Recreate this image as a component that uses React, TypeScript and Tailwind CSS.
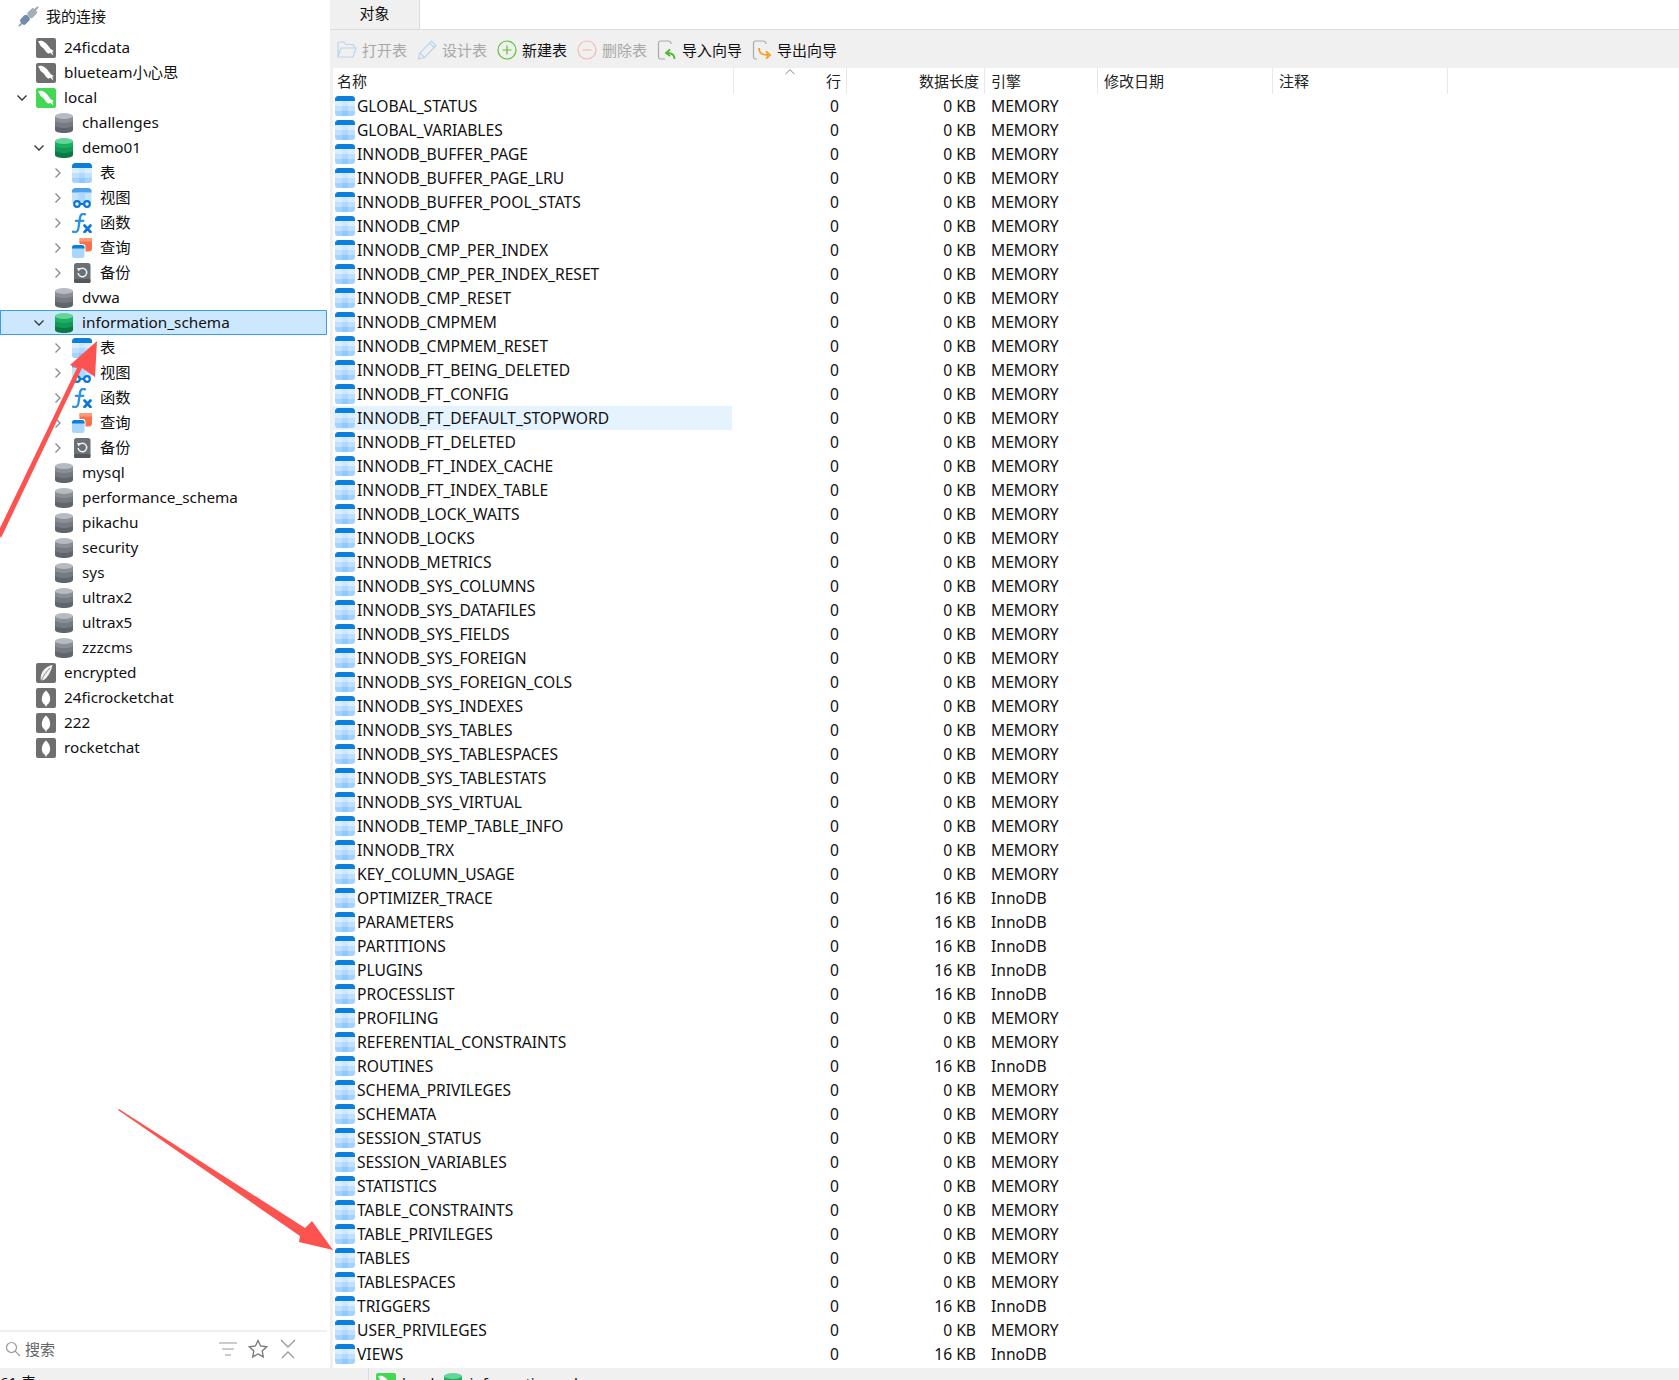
const FONT = "font-['Noto_Sans','Noto_Sans_CJK_SC',sans-serif]";

const rows: [string, number, string][] = [
  ...[
    "GLOBAL_STATUS","GLOBAL_VARIABLES","INNODB_BUFFER_PAGE","INNODB_BUFFER_PAGE_LRU","INNODB_BUFFER_POOL_STATS","INNODB_CMP","INNODB_CMP_PER_INDEX","INNODB_CMP_PER_INDEX_RESET","INNODB_CMP_RESET","INNODB_CMPMEM","INNODB_CMPMEM_RESET","INNODB_FT_BEING_DELETED","INNODB_FT_CONFIG","INNODB_FT_DEFAULT_STOPWORD","INNODB_FT_DELETED","INNODB_FT_INDEX_CACHE","INNODB_FT_INDEX_TABLE","INNODB_LOCK_WAITS","INNODB_LOCKS","INNODB_METRICS","INNODB_SYS_COLUMNS","INNODB_SYS_DATAFILES","INNODB_SYS_FIELDS","INNODB_SYS_FOREIGN","INNODB_SYS_FOREIGN_COLS","INNODB_SYS_INDEXES","INNODB_SYS_TABLES","INNODB_SYS_TABLESPACES","INNODB_SYS_TABLESTATS","INNODB_SYS_VIRTUAL","INNODB_TEMP_TABLE_INFO","INNODB_TRX","KEY_COLUMN_USAGE",
  ].map((n): [string, number, string] => [n, 0, "MEMORY"]),
  ["OPTIMIZER_TRACE",16,"InnoDB"],["PARAMETERS",16,"InnoDB"],["PARTITIONS",16,"InnoDB"],["PLUGINS",16,"InnoDB"],["PROCESSLIST",16,"InnoDB"],
  ["PROFILING",0,"MEMORY"],["REFERENTIAL_CONSTRAINTS",0,"MEMORY"],["ROUTINES",16,"InnoDB"],["SCHEMA_PRIVILEGES",0,"MEMORY"],["SCHEMATA",0,"MEMORY"],["SESSION_STATUS",0,"MEMORY"],["SESSION_VARIABLES",0,"MEMORY"],["STATISTICS",0,"MEMORY"],["TABLE_CONSTRAINTS",0,"MEMORY"],["TABLE_PRIVILEGES",0,"MEMORY"],["TABLES",0,"MEMORY"],["TABLESPACES",0,"MEMORY"],["TRIGGERS",16,"InnoDB"],["USER_PRIVILEGES",0,"MEMORY"],["VIEWS",16,"InnoDB"],
];

function TableIcon({ className = "w-5 h-5" }: { className?: string }) {
  return (
    <svg viewBox="0 0 20 20" className={className}>
      <defs>
        <clipPath id="tc"><rect width="20" height="20" rx="3.5" /></clipPath>
      </defs>
      <g clipPath="url(#tc)">
        <rect width="20" height="20" fill="#c6e3fe" />
        <rect width="20" height="5" fill="#0a7fdc" />
        <rect x="0" y="5" width="7" height="5" fill="#dbeeff" />
        <rect x="7" y="5" width="6" height="5" fill="#cfe8ff" />
        <rect x="13" y="5" width="7" height="5" fill="#dbeeff" />
        <rect x="0" y="10" width="7" height="5" fill="#bfe0ff" />
        <rect x="7" y="10" width="6" height="5" fill="#aed8ff" />
        <rect x="13" y="10" width="7" height="5" fill="#bfe0ff" />
        <rect x="0" y="15" width="7" height="5" fill="#a3d3ff" />
        <rect x="7" y="15" width="6" height="5" fill="#8fc9ff" />
        <rect x="13" y="15" width="7" height="5" fill="#a3d3ff" />
      </g>
    </svg>
  );
}

function ViewIcon() {
  return (
    <svg viewBox="0 0 20 20" className="w-5 h-5">
      <rect x="0" y="0" width="19.500" height="17" rx="3.500" fill="#c6e3fe" />
      <path d="M0 3.500A3.500 3.500 0 0 1 3.500 0h12.500A3.500 3.500 0 0 1 19.500 3.500V4.500H0z" fill="#4aa3ea" />
      <rect x="6.500" y="4.500" width="6.500" height="12" fill="#aed8ff" />
      <circle cx="5" cy="16" r="2.800" fill="#fff" stroke="#0a78d6" strokeWidth="2.200" />
      <circle cx="15" cy="16" r="2.800" fill="#fff" stroke="#0a78d6" strokeWidth="2.200" />
      <rect x="7.500" y="15" width="5" height="2" fill="#0a78d6" />
    </svg>
  );
}

function FxIcon() {
  return (
    <svg viewBox="0 0 20 20" className="w-5 h-5" fill="none" strokeLinecap="round">
      <path d="M13 1.300C10 .2 8.500 1.800 8 4.800L6.400 15.300C5.900 18.500 4 19.800 1 18.600" stroke="#2a93e8" strokeWidth="2.300" />
      <path d="M3.800 7.800h7.600" stroke="#2a93e8" strokeWidth="2.300" />
      <path d="M12.500 12.500l6 6.500M18.500 12.500l-6 6.500" stroke="#0a78d6" strokeWidth="2.600" />
    </svg>
  );
}

function QueryIcon() {
  return (
    <svg viewBox="0 0 20 20" className="w-5 h-5">
      <path d="M7.500 1A1 1 0 0 1 8.500 0H19a1 1 0 0 1 1 1v9.500a3 3 0 0 1-3 3h-3.500V9A3 3 0 0 0 10.500 6H7.500z" fill="#f8714d" />
      <rect x="7.500" y="0" width="12.500" height="3.500" rx="1" fill="#ff9a78" />
      <rect x="0" y="7" width="12.500" height="13" rx="2.500" fill="#a8d6ff" />
      <path d="M0 9.500A2.500 2.500 0 0 1 2.500 7h7.500A2.500 2.500 0 0 1 12.500 9.500V10.500H0z" fill="#0a7fdc" />
    </svg>
  );
}

function BackupIcon() {
  return (
    <svg viewBox="0 0 20 20" className="w-5 h-5">
      <rect x="2" y="0" width="16.500" height="20" rx="2.500" fill="#6b7076" />
      <rect x="2" y="16" width="16.500" height="4" rx="1.500" fill="#54585e" />
      <path d="M7 6.800A4.300 4.300 0 1 1 6.100 10" fill="none" stroke="#f2f2f2" strokeWidth="1.500" />
      <path d="M5 4.800l3.800.600-2.300 3z" fill="#f2f2f2" />
    </svg>
  );
}

function DbIcon({ green }: { green?: boolean }) {
  const [a, b, c, d] = green
    ? ["#63d596", "#1cae63", "#119a55", "#0b7a42"]
    : ["#b7bbc1", "#8a8f96", "#757a82", "#5f656c"];
  return (
    <svg viewBox="0 0 18 20" className="w-[18px] h-[20px]">
      <path d="M0 3v14c0 1.700 4 3 9 3s9-1.300 9-3V3z" fill={d} />
      <path d="M0 3v9c0 1.700 4 3 9 3s9-1.300 9-3V3z" fill={c} />
      <path d="M0 3v4c0 1.700 4 3 9 3s9-1.300 9-3V3z" fill={b} />
      <ellipse cx="9" cy="3" rx="9" ry="3" fill={a} />
    </svg>
  );
}

function Dolphin({ green }: { green?: boolean }) {
  return (
    <svg viewBox="0 0 20 20" className="w-5 h-5">
      <rect width="20" height="20" rx="2" fill={green ? "#43d854" : "#6f6f6f"} />
      <path d="M2 3.500c2.200-1.300 4.800-.700 7 1 2.600 2 4 4.500 5.500 6.200.9 1 2 1.700 3.500 2.300l-1.700.8 1 3.700-3-2.700c-.7 1-1.700.9-2.600.5-2-1-2.600-3-4-4.700C6.500 9 5 8.600 4.300 7.400 3.800 6.300 3.200 4.600 2 3.500z" fill="#fff" />
    </svg>
  );
}

function Leaf({ feather }: { feather?: boolean }) {
  return (
    <svg viewBox="0 0 20 20" className="w-5 h-5">
      <rect width="20" height="20" rx="2" fill="#6f6f6f" />
      {feather ? (
        <>
          <path d="M16.500 2C10 3 5.500 8 4.800 14c-.200 1.300-.100 2.500.100 3.500 1 .200 2.400-.200 3.600-1 3.500-2.600 6.500-8 8-14.500z" fill="#f2f2f2" />
          <path d="M14 5C10 9 7 13 5 18.500" stroke="#6f6f6f" strokeWidth="0.800" fill="none" />
        </>
      ) : (
        <path d="M10 2.500c2.500 2.300 4.200 5.200 4.200 8.500 0 3-1.600 5-3.400 6l-.3 1.500h-1l-.3-1.500c-1.800-1-3.400-3-3.400-6 0-3.300 1.700-6.200 4.200-8.500z" fill="#fff" />
      )}
    </svg>
  );
}

function PlugIcon() {
  return (
    <svg viewBox="0 0 22 22" className="w-[21px] h-[21px]">
      <path d="M1.500 20.500L6 16" stroke="#8fa3b8" strokeWidth="2" strokeLinecap="round" />
      <path d="M16 6l4.500-4.500" stroke="#8fa3b8" strokeWidth="2" strokeLinecap="round" />
      <rect x="3.500" y="9.500" width="7.500" height="10" rx="2.500" transform="rotate(45 7.250 14.500)" fill="#6e8cb0" />
      <rect x="11" y="2.500" width="7.500" height="10" rx="2.500" transform="rotate(45 14.750 7.500)" fill="#a7adb5" />
    </svg>
  );
}

function Chevron({ open }: { open?: boolean }) {
  return open ? (
    <svg viewBox="0 0 12 12" className="w-3 h-3 ml-[1px]" fill="none">
      <path d="M1.500 3.500L6 8l4.500-4.500" stroke="#333" strokeWidth="1.300" />
    </svg>
  ) : (
    <svg viewBox="0 0 12 12" className="w-3 h-3" fill="none">
      <path d="M3.500 1.500L8 6l-4.500 4.500" stroke="#8a8a8a" strokeWidth="1.300" />
    </svg>
  );
}

function TreeRow({
  pad, chevron, icon, label, selected,
}: { pad: number; chevron?: "open" | "closed"; icon: React.ReactNode; label: string; selected?: boolean }) {
  const padClass = pad === 1 ? "pl-[15px]" : pad === 2 ? "pl-[32px]" : "pl-[52px]";
  const gapClass = pad === 1 ? "w-[21px]" : pad === 2 ? "w-[22px]" : "w-[20px]";
  return (
    <div className={`h-[25px] flex items-center text-[15.3px] text-[#111] ${padClass} ${selected ? "bg-[#cce8ff] shadow-[inset_0_0_0_1px_#3e9bea] w-[327px] rounded-[1px]" : ""}`}>
      <div className={`${gapClass} shrink-0 flex items-center`}>
        {chevron && <Chevron open={chevron === "open"} />}
      </div>
      <div className="w-5 h-5 shrink-0 flex items-center justify-center">{icon}</div>
      <span className="ml-[8px] whitespace-nowrap">{label}</span>
    </div>
  );
}

function SubTree() {
  return (
    <>
      <TreeRow pad={3} chevron="closed" icon={<TableIcon />} label="表" />
      <TreeRow pad={3} chevron="closed" icon={<ViewIcon />} label="视图" />
      <TreeRow pad={3} chevron="closed" icon={<FxIcon />} label="函数" />
      <TreeRow pad={3} chevron="closed" icon={<QueryIcon />} label="查询" />
      <TreeRow pad={3} chevron="closed" icon={<BackupIcon />} label="备份" />
    </>
  );
}

function Sidebar() {
  const db = (n: string) => <TreeRow key={n} pad={2} icon={<DbIcon />} label={n} />;
  return (
    <aside className="w-[330px] shrink-0 flex flex-col h-full">
      <div className="h-[35px] flex items-center pl-[18px] pb-[2px] text-[15px] text-[#111]">
        <PlugIcon />
        <span className="ml-[7px]">我的连接</span>
      </div>
      <TreeRow pad={1} icon={<Dolphin />} label="24ficdata" />
      <TreeRow pad={1} icon={<Dolphin />} label="blueteam小心思" />
      <TreeRow pad={1} chevron="open" icon={<Dolphin green />} label="local" />
      {db("challenges")}
      <TreeRow pad={2} chevron="open" icon={<DbIcon green />} label="demo01" />
      <SubTree />
      {db("dvwa")}
      <TreeRow pad={2} chevron="open" icon={<DbIcon green />} label="information_schema" selected />
      <SubTree />
      {["mysql", "performance_schema", "pikachu", "security", "sys", "ultrax2", "ultrax5", "zzzcms"].map(db)}
      <TreeRow pad={1} icon={<Leaf feather />} label="encrypted" />
      <TreeRow pad={1} icon={<Leaf />} label="24ficrocketchat" />
      <TreeRow pad={1} icon={<Leaf />} label="222" />
      <TreeRow pad={1} icon={<Leaf />} label="rocketchat" />
      <div className="flex-1" />
      <div className="h-[38px] border-t-2 border-[#f0f0f0] w-[327px] flex items-center pl-[5px] pb-[2px]">
        <svg viewBox="0 0 16 16" className="w-4 h-4" fill="none" stroke="#9a9a9a" strokeWidth="1.200">
          <circle cx="6.500" cy="6.500" r="5" />
          <path d="M10.200 10.200L15 15" />
        </svg>
        <span className="ml-[4px] text-[15px] text-[#666]">搜索</span>
        <div className="flex-1" />
        <svg viewBox="0 0 18 14" className="w-[18px] h-[14px] mr-[11px]" fill="none" stroke="#9a9a9a" strokeWidth="1.200">
          <path d="M0 1h18M3 7h12M6 13h6" />
        </svg>
        <svg viewBox="0 0 20 20" className="w-5 h-5 mr-[12px]" fill="none" stroke="#777" strokeWidth="1.300">
          <path d="M10 1.500l2.600 5.500 6 .8-4.400 4.100 1.100 6L10 15l-5.300 2.900 1.100-6L1.400 7.800l6-.8z" />
        </svg>
        <svg viewBox="0 0 16 20" className="w-4 h-5 mr-[31px]" fill="none" stroke="#9a9a9a" strokeWidth="1.300">
          <path d="M1 1l7 7 7-7M2 19l6-6 6 6" />
        </svg>
      </div>
    </aside>
  );
}

function ToolItem({ icon, label, disabled }: { icon: React.ReactNode; label: string; disabled?: boolean }) {
  return (
    <div className="flex items-center gap-[5px]">
      <span className="w-5 h-5 flex items-center justify-center">{icon}</span>
      <span className={`text-[15px] whitespace-nowrap ${disabled ? "text-[#a8a8a8]" : "text-[#111]"}`}>{label}</span>
    </div>
  );
}

function Toolbar() {
  return (
    <div className="h-[38px] bg-[#f0f0f0] flex items-center pl-[7px] pt-[2px] gap-[10px]">
      <ToolItem disabled label="打开表" icon={
        <svg viewBox="0 0 20 18" className="w-5 h-[18px]" fill="none" stroke="#b9d4ec" strokeWidth="1.200">
          <path d="M1 16V2.500A1.500 1.500 0 0 1 2.500 1H7l2 2.500h7a1 1 0 0 1 1 1V7" />
          <path d="M1 16L4 7h15l-3 9z" />
        </svg>} />
      <ToolItem disabled label="设计表" icon={
        <svg viewBox="0 0 20 20" className="w-5 h-5" fill="none" stroke="#b9d4ec" strokeWidth="1.200">
          <path d="M1.500 19l1.500-6L14.500 1l4.500 4.500L7.500 17.500z" />
          <path d="M3 13l4.500 4.500M12.500 3l4.500 4.500" />
        </svg>} />
      <ToolItem label="新建表" icon={
        <svg viewBox="0 0 20 20" className="w-5 h-5" fill="none" stroke="#5fc235" strokeWidth="1.200">
          <circle cx="10" cy="10" r="9" />
          <path d="M10 5.500v9M5.500 10h9" />
        </svg>} />
      <ToolItem disabled label="删除表" icon={
        <svg viewBox="0 0 20 20" className="w-5 h-5" fill="none" stroke="#f5b8b4" strokeWidth="1.200">
          <circle cx="10" cy="10" r="9" />
          <path d="M5.500 10h9" />
        </svg>} />
      <ToolItem label="导入向导" icon={
        <svg viewBox="0 0 20 20" className="w-5 h-5" fill="none">
          <path d="M8 19H3.500A2 2 0 0 1 1.500 17V3A2 2 0 0 1 3.500 1H11a3 3 0 0 1 3 3" stroke="#aaaaaa" strokeWidth="1.200" />
          <path d="M17.500 19c0-4-2-6-7-6" stroke="#4cb82c" strokeWidth="1.800" />
          <path d="M13 9.500l-4 3.500 4 3" stroke="#4cb82c" strokeWidth="1.800" />
        </svg>} />
      <ToolItem label="导出向导" icon={
        <svg viewBox="0 0 20 20" className="w-5 h-5" fill="none">
          <path d="M5 19H3.500A2 2 0 0 1 1.500 17V3A2 2 0 0 1 3.500 1H11a3 3 0 0 1 3 3" stroke="#aaaaaa" strokeWidth="1.200" />
          <path d="M7 8c0 5 2.500 7 9 7" stroke="#f59e1b" strokeWidth="1.800" />
          <path d="M14 11.500l4 3.500-4 3.500" stroke="#f59e1b" strokeWidth="1.800" />
        </svg>} />
    </div>
  );
}

function Header() {
  return (
    <div className="h-[26px] flex text-[15px] text-[#222] relative">
      <div className="w-[401px] border-r border-[#e8e8e8] pl-[4px] flex items-center">名称</div>
      <div className="w-[113px] border-r border-[#e8e8e8] pr-[5px] flex items-center justify-end">行</div>
      <div className="w-[138px] border-r border-[#e8e8e8] pr-[5px] flex items-center justify-end">数据长度</div>
      <div className="w-[113px] border-r border-[#e8e8e8] pl-[6px] flex items-center">引擎</div>
      <div className="w-[175px] border-r border-[#e8e8e8] pl-[6px] flex items-center">修改日期</div>
      <div className="w-[175px] border-r border-[#e8e8e8] pl-[6px] flex items-center">注释</div>
      <svg viewBox="0 0 10 6" className="absolute left-[452px] top-[1px] w-[10px] h-[6px]" fill="none" stroke="#888" strokeWidth="1">
        <path d="M.5 5L5 .8 9.500 5" />
      </svg>
    </div>
  );
}

function Row({ name, kb, engine }: { name: string; kb: number; engine: string }) {
  const hl = name === "INNODB_FT_DEFAULT_STOPWORD";
  return (
    <div className="h-6 flex items-center text-[15.6px] text-[#111]">
      <div className={`w-[399px] h-6 flex items-center pl-[2px] ${hl ? "bg-[#e5f3ff]" : ""}`}>
        <TableIcon className="w-5 h-5 shrink-0" />
        <span className="ml-[2px] pt-[2px] whitespace-nowrap">{name}</span>
      </div>
      <div className="w-[107px] pt-[2px] text-right">0</div>
      <div className="w-[137px] pt-[2px] text-right">{kb} KB</div>
      <div className="ml-[15px] pt-[2px]">{engine}</div>
    </div>
  );
}

export default function App() {
  return (
    <div className={`${FONT} relative w-[1679px] h-[1380px] overflow-hidden bg-white flex flex-col`}>
      <div className="flex h-[1368px]">
        <Sidebar />
        <main className="flex-1 min-w-0 flex flex-col">
          <div className="h-[30px] flex border-b border-[#dcdcdc]">
            <div className="w-[90px] bg-[#f0f0f0] flex items-center justify-center pb-[2px] text-[15px] text-[#111] border-r border-[#dcdcdc]">对象</div>
          </div>
          <Toolbar />
          <div className="flex-1 border-l-[3px] border-[#f0f0f0]">
            <Header />
            {rows.map(([n, k, e]) => <Row key={n} name={n} kb={k} engine={e} />)}
          </div>
        </main>
      </div>
      <div className="h-[12px] bg-[#f0f0f0] flex text-[15px] text-[#111] overflow-hidden">
        <div className="w-[369px] border-r border-[#dcdcdc] leading-[28px]">61 表</div>
        <div className="flex pt-[5px] pl-[7px]">
          <Dolphin green />
          <span className="ml-[6px] mr-[10px] leading-[20px]">local</span>
          <DbIcon green />
          <span className="ml-[7px] leading-[20px]">information_schema</span>
        </div>
      </div>
      <svg className="absolute inset-0 w-[1679px] h-[1380px] pointer-events-none" viewBox="0 0 1679 1380">
        <polygon points="97,341 95,377 82,368 1,538 0,536 0,528 77,368 70,365" fill="#fc5350" />
        <polygon points="118,1110 119,1109 305,1228 312,1221 333,1250 299,1242 300,1236" fill="#fc5350" />
      </svg>
    </div>
  );
}
